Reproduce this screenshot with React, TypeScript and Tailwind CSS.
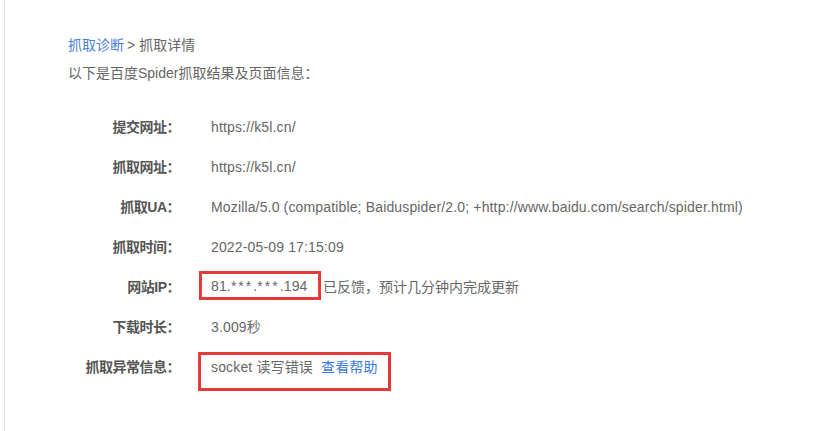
import React from 'react';

const font = { fontFamily: '"Liberation Sans", "Noto Sans CJK SC", sans-serif' };

interface Row {
    label: string;
    value: React.ReactNode;
}

const rows: Row[] = [
    { label: '提交网址：', value: 'https://k5l.cn/' },
    { label: '抓取网址：', value: 'https://k5l.cn/' },
    {
        label: '抓取UA：',
        value: 'Mozilla/5.0 (compatible; Baiduspider/2.0; +http://www.baidu.com/search/spider.html)',
    },
    { label: '抓取时间：', value: '2022-05-09 17:15:09' },
    {
        label: '网站IP：',
        value: (
            <>
                <span className="inline-flex items-center h-[29px] w-[122px] -ml-[12px] mb-[3px] pl-[9px] border-[3px] border-[#e53a3a]">
                    81.<span className="tracking-[2px]">***</span>.<span className="tracking-[2px]">***</span>.194
                </span>
                <span className="ml-[2px] tracking-normal">已反馈，预计几分钟内完成更新</span>
            </>
        ),
    },
    { label: '下载时长：', value: '3.009秒' },
    {
        label: '抓取异常信息：',
        value: (
            <span className="self-start mt-[5px] inline-flex items-start h-[39px] w-[193px] -ml-[13px] pt-[2px] pl-[10px] border-[3px] border-[#e53a3a]">
                <span>socket 读写错误</span>
                <a className="ml-[8px] text-[#3b7be0]" href="#">查看帮助</a>
            </span>
        ),
    },
];

export default function App() {
    return (
        <div className="w-[839px] h-[431px] bg-white overflow-hidden" style={font}>
            <div className="ml-[4px] h-full border-l border-[#e6e6e6] pl-[63px] pt-[31px] text-[14px] leading-[28px] text-[#666]">
                <div>
                    <a className="text-[#4a7fd6]" href="#">抓取诊断</a>
                    <span className="ml-[3px]">&gt;</span>
                    <span className="ml-[4px]">抓取详情</span>
                </div>
                <div>以下是百度Spider抓取结果及页面信息：</div>

                <div className="mt-[20px] leading-[20px]">
                    {rows.map((row) => (
                        <div key={row.label} className="flex items-center h-[40px]">
                            <div className="w-[112px] shrink-0 text-right font-bold text-[#555] tracking-[-0.5px]">{row.label}</div>
                            <div className="ml-[31px] flex items-center h-full whitespace-nowrap tracking-[0.15px]">{row.value}</div>
                        </div>
                    ))}
                </div>
            </div>
        </div>
    );
}
